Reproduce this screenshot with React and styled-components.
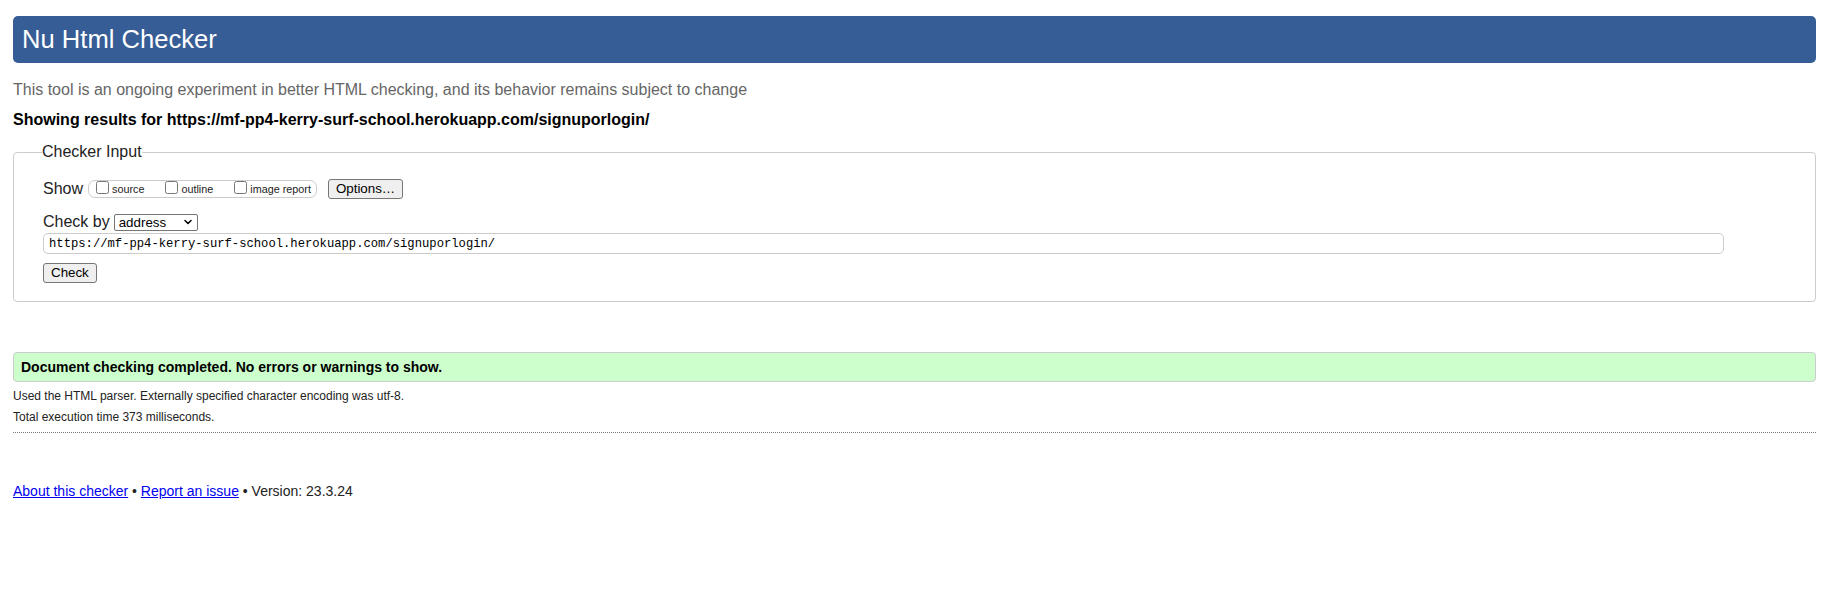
import React from 'react';
import styled, { createGlobalStyle } from 'styled-components';
import { ChevronDown } from 'lucide-react';

const GlobalStyle = createGlobalStyle`
  html, body {
    margin: 0;
    padding: 0;
    background: #fff;
  }
  body {
    font-family: "Liberation Sans", Arial, Helvetica, sans-serif;
    color: #000;
  }
`;

const Page = styled.div`
  padding: 16px 18px 40px 13px;
`;

const Banner = styled.h1`
  margin: 0;
  height: 47px;
  padding: 0 9px;
  line-height: 47px;
  font-size: 25.6px;
  font-weight: normal;
  color: #fff;
  background: #365d95;
  border-radius: 5px;
`;

const Intro = styled.p`
  margin: 17px 0 0;
  font-size: 16px;
  line-height: 20px;
  color: #666;
`;

const Subject = styled.p`
  margin: 10px 0 0;
  font-size: 16px;
  line-height: 20px;
  font-weight: bold;
  color: #000;
`;

const InputFieldset = styled.fieldset`
  margin: 13px 0 0;
  padding: 0 91px 18px 29px;
  border: 1px solid #ccc;
  border-radius: 4px;
  min-inline-size: 0;
`;

const Legend = styled.legend`
  margin-left: -1px;
  padding: 0;
  font-size: 16px;
  line-height: 18px;
  color: #222;
`;

const Row = styled.div`
  display: flex;
  align-items: center;
  height: 21px;
  margin-top: ${(p) => p.$top}px;
`;

const RowLabel = styled.span`
  font-size: 16px;
  color: #222;
  margin-right: ${(p) => p.$gap}px;
`;

const CheckGroup = styled.span`
  display: inline-flex;
  align-items: center;
  box-sizing: border-box;
  height: 18px;
  padding: 0 5px 0 3px;
  border: 1px solid #ccc;
  border-radius: 7px;
`;

const OptLabel = styled.label`
  display: inline-flex;
  align-items: center;
  font-size: 10.8px;
  color: #222;
  margin-right: ${(p) => (p.$last ? 0 : 17)}px;
`;

const Box = styled.input`
  width: 13px;
  height: 13px;
  margin: 0 3px 2px 4px;
`;

const NativeButton = styled.button`
  box-sizing: border-box;
  height: 20px;
  margin: ${(p) => p.$margin || 0};
  padding: 0 7px;
  font-family: "Liberation Sans", Arial, sans-serif;
  font-size: 13.33px;
  line-height: 16px;
  color: #000;
  background: #efefef;
  border: 1px solid #767676;
  border-radius: 3px;
`;

const SelectWrap = styled.span`
  position: relative;
  display: inline-block;
  width: 84px;
  height: 17px;
`;

const Select = styled.select`
  appearance: none;
  box-sizing: border-box;
  width: 100%;
  height: 100%;
  padding: 0 16px 0 4px;
  font-family: "Liberation Sans", Arial, sans-serif;
  font-size: 13.33px;
  line-height: 15px;
  color: #000;
  background: #fff;
  border: 1px solid #767676;
  border-radius: 2px;
`;

const SelectArrow = styled(ChevronDown)`
  position: absolute;
  top: 3px;
  right: 4px;
  pointer-events: none;
  color: #000;
`;

const UrlInput = styled.input`
  display: block;
  box-sizing: border-box;
  width: 100%;
  height: 21px;
  margin: 1px 0 0;
  padding: 0 5px;
  font-family: "Liberation Mono", "DejaVu Sans Mono", monospace;
  font-size: 12.2px;
  color: #000;
  border: 1px solid #ccc;
  border-radius: 5px;
  outline: none;
`;

const Success = styled.div`
  margin-top: 50px;
  padding: 0 7px;
  line-height: 28px;
  font-size: 14px;
  font-weight: bold;
  background: #ccffcc;
  border: 1px solid #ccc;
  border-radius: 4px;
`;

const Detail = styled.p`
  margin: ${(p) => (p.$first ? 7 : 6)}px 0 0;
  font-size: 12px;
  line-height: 15px;
  color: #222;
`;

const Divider = styled.div`
  margin-top: 7px;
  border-top: 1px dotted #777;
`;

const Footer = styled.p`
  margin: 50px 0 0;
  font-size: 14px;
  line-height: 16px;
  color: #222;

  a {
    color: #0000ee;
  }
`;

const url = 'https://mf-pp4-kerry-surf-school.herokuapp.com/signuporlogin/';

const showOptions = ['source', 'outline', 'image report'];

export default function App() {
  return (
    <>
      <GlobalStyle />
      <Page>
        <Banner>Nu Html Checker</Banner>
        <Intro>
          This tool is an ongoing experiment in better HTML checking, and its behavior remains subject to change
        </Intro>
        <Subject>Showing results for {url}</Subject>

        <InputFieldset>
          <Legend>Checker Input</Legend>
          <Row $top={17}>
            <RowLabel $gap={5}>Show</RowLabel>
            <CheckGroup>
              {showOptions.map((name, i) => (
                <OptLabel key={name} $last={i === showOptions.length - 1}>
                  <Box type="checkbox" />
                  {name}
                </OptLabel>
              ))}
            </CheckGroup>
            <NativeButton type="button" $margin="0 0 0 11px">Options…</NativeButton>
          </Row>
          <Row $top={12}>
            <RowLabel $gap={4}>Check by</RowLabel>
            <SelectWrap>
              <Select defaultValue="address">
                <option value="address">address</option>
                <option value="upload">file upload</option>
                <option value="text">text input</option>
              </Select>
              <SelectArrow size={12} strokeWidth={3} />
            </SelectWrap>
          </Row>
          <UrlInput type="url" defaultValue={url} />
          <NativeButton type="submit" $margin="9px 0 0">Check</NativeButton>
        </InputFieldset>

        <Success>Document checking completed. No errors or warnings to show.</Success>
        <Detail $first>Used the HTML parser. Externally specified character encoding was utf-8.</Detail>
        <Detail>Total execution time 373 milliseconds.</Detail>
        <Divider />

        <Footer>
          <a href="#about">About this checker</a> • <a href="#issue">Report an issue</a> • Version: 23.3.24
        </Footer>
      </Page>
    </>
  );
}
